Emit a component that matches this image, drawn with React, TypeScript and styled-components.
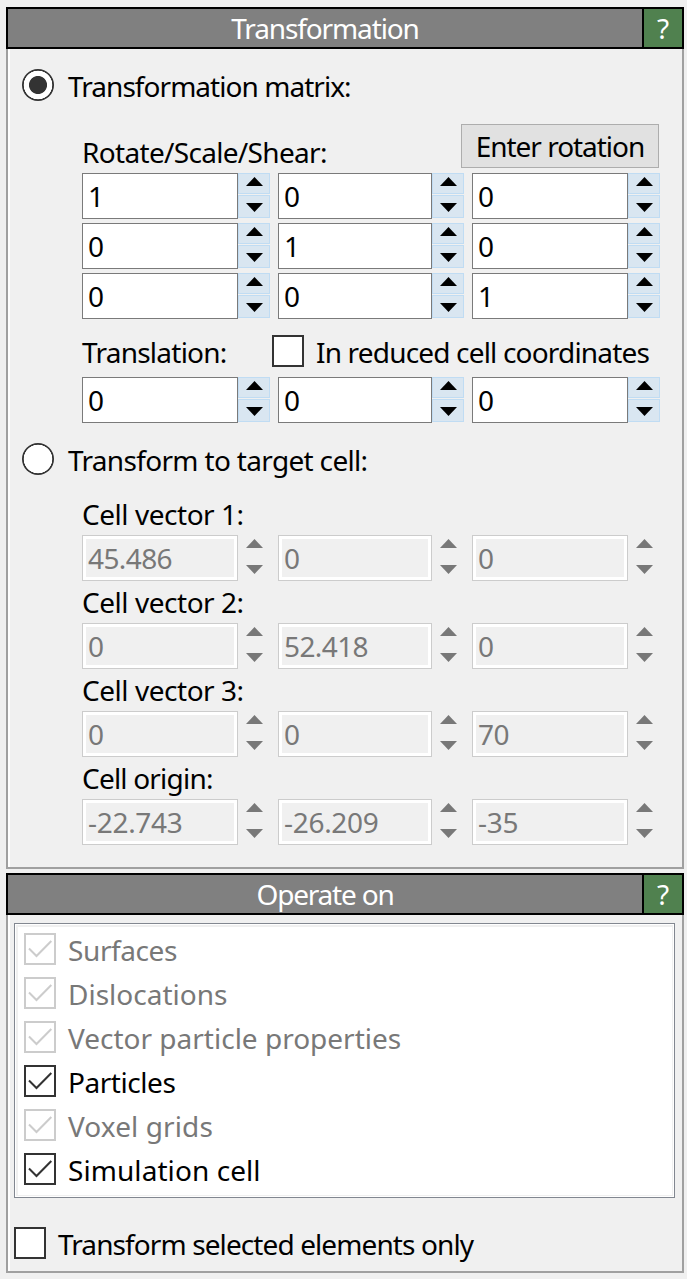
import React from "react";
import styled, { createGlobalStyle } from "styled-components";

const GlobalStyle = createGlobalStyle`
  * { box-sizing: border-box; }
  body {
    margin: 0;
    background: #f0f0f0;
    color: #000;
    font-family: "Noto Sans", "Open Sans", sans-serif;
    font-size: 28px;
    line-height: 32px;
  }
`;

const Window = styled.main`
  width: 687px;
  height: 1279px;
  padding: 7px 3px 0 6px;
  display: flex;
  flex-direction: column;
  gap: 4px;
  background: #f0f0f0;
  overflow: hidden;
`;

const Panel = styled.section<{ $height: number }>`
  display: flex;
  flex-direction: column;
  height: ${(p) => p.$height}px;
  flex: none;
`;

const Header = styled.header`
  display: flex;
  height: 42px;
  flex: none;
  border: 2px solid #000;
  background: #808080;
  color: #fff;
  text-align: center;
`;

const Title = styled.div`
  flex: 1;
  padding-top: 3px;
`;

const Help = styled.div`
  width: 40px;
  padding-top: 3px;
  border-left: 2px solid #000;
  background: #50814f;
`;

const Body = styled.div<{ $pad: string }>`
  flex: 1;
  display: flex;
  flex-direction: column;
  padding: ${(p) => p.$pad};
  border: 2px solid #a0a0a0;
  border-top: 0;
  box-shadow: inset 2px 0 #fff;
`;

const Text = styled.span<{ $track?: number }>`
  display: inline-block;
  white-space: nowrap;
  letter-spacing: ${(p) => p.$track ?? 0}px;
`;

const OptionRow = styled.label<{ $gap?: number }>`
  display: flex;
  height: 32px;
  gap: ${(p) => p.$gap ?? 14}px;

  & > ${Text} {
    margin-top: 1px;
  }
`;

const RadioMark = styled.span<{ $on?: boolean }>`
  flex: none;
  width: 32px;
  height: 32px;
  border-radius: 50%;
  background: radial-gradient(
    circle,
    ${(p) => (p.$on ? "#333 8.6px, #fff 9.4px" : "#fff 9px")},
    #fff 14px,
    #333 14.6px
  );
`;

const Box = styled.span<{ $dim?: boolean }>`
  flex: none;
  width: 32px;
  height: 32px;
  border: 2px solid ${(p) => (p.$dim ? "#ccc" : "#333")};
  background: #fff;
  color: ${(p) => (p.$dim ? "#ccc" : "#333")};

  svg { display: block; }
`;

const Group = styled.div`
  padding-left: 60px;
  display: flex;
  flex-direction: column;
`;

const MatrixHead = styled.div`
  display: flex;
  justify-content: space-between;
  width: 577px;
  height: 44px;
  margin: 23px 0 5px;

  & > ${Text} { margin-top: 12px; }
`;

const Button = styled.button`
  width: 198px;
  height: 44px;
  padding: 0;
  border: 1px solid #adadad;
  background: #e1e1e1;
  color: #000;
  font: inherit;
`;

const Rows = styled.div`
  display: flex;
  flex-direction: column;
  gap: 4px;
`;

const TripleRow = styled.div`
  display: grid;
  grid-template-columns: 188px 186px 188px;
  column-gap: 8px;
  height: 46px;
`;

const Spin = styled.div`
  display: flex;
`;

const Field = styled.div<{ $off?: boolean }>`
  flex: 1;
  padding: 6px 0 0 5px;
  border: 1px solid ${(p) => (p.$off ? "#ccc" : "#7a7a7a")};
  background: ${(p) => (p.$off ? "#f0f0f0" : "#fff")};
  box-shadow: inset 0 0 0 3px #fff;
  color: ${(p) => (p.$off ? "#787878" : "#000")};
`;

const Steps = styled.div`
  width: 32px;
  height: 45px;
  display: grid;
  grid-template-rows: 21px 23px;
  row-gap: 1px;
`;

const Step = styled.div<{ $off?: boolean; $top: number }>`
  padding: ${(p) => p.$top}px 0 0 7px;
  border: 1px solid ${(p) => (p.$off ? "transparent" : "#c0dcf3")};
  background: ${(p) => (p.$off ? "transparent" : "#d9e6f1")};
  color: ${(p) => (p.$off ? "#787878" : "#000")};

  svg { display: block; }
`;

const TranslationRow = styled.div`
  display: grid;
  grid-template-columns: 190px 1fr;
  height: 32px;
  margin: 16px 0 10px;

  & > ${Text} { margin-top: 1px; }
`;

const VectorBlock = styled.div`
  display: grid;
  grid-template-rows: 32px 46px;
  row-gap: 5px;
  margin-bottom: 5px;
`;

const List = styled.div`
  display: flex;
  flex-direction: column;
  gap: 12px;
  width: 661px;
  height: 275px;
  padding: 9px;
  border: 1px solid #828790;
  background: #fff;
  box-shadow: inset 0 0 0 1px #fff, inset 0 0 0 2px #f0f0f0, inset 3px 3px #f0f0f0;
`;

const ListRow = styled.label<{ $dim?: boolean }>`
  display: flex;
  gap: 12px;
  height: 32px;
  color: ${(p) => (p.$dim ? "#787878" : "#000")};

  & > ${Text} { margin-top: 1px; }
`;

const Spacer = styled.div<{ $h: number }>`
  height: ${(p) => p.$h}px;
  flex: none;
`;

const Arrow = ({ down }: { down?: boolean }) => (
  <svg width="17" height="9" viewBox="0 0 17 9" fill="currentColor">
    <path d={down ? "M0 0H17L8.5 9Z" : "M0 9H17L8.5 0Z"} />
  </svg>
);

const Tick = () => (
  <svg width="28" height="28" viewBox="0 0 28 28" fill="none" stroke="currentColor" strokeWidth="2">
    <path d="M3 13.5L10.5 21L25.3 6" />
  </svg>
);

const Triple = ({ values, off }: { values: string[]; off?: boolean }) => (
  <TripleRow>
    {values.map((v, i) => (
      <Spin key={i}>
        <Field $off={off}>
          <Text $track={v.startsWith("-") ? -0.3 : -0.6}>{v}</Text>
        </Field>
        <Steps>
          <Step $off={off} $top={3}><Arrow /></Step>
          <Step $off={off} $top={7}><Arrow down /></Step>
        </Steps>
      </Spin>
    ))}
  </TripleRow>
);

const matrix = [["1", "0", "0"], ["0", "1", "0"], ["0", "0", "1"]];

const cell = [
  { label: "Cell vector 1:", track: -0.46, values: ["45.486", "0", "0"] },
  { label: "Cell vector 2:", track: -0.46, values: ["0", "52.418", "0"] },
  { label: "Cell vector 3:", track: -0.46, values: ["0", "0", "70"] },
  { label: "Cell origin:", track: -0.8, values: ["-22.743", "-26.209", "-35"] },
];

const elements = [
  { label: "Surfaces", track: -0.4, dim: true },
  { label: "Dislocations", track: 0, dim: true },
  { label: "Vector particle properties", track: 0, dim: true },
  { label: "Particles", track: -0.45 },
  { label: "Voxel grids", track: 0.1, dim: true },
  { label: "Simulation cell", track: 0.07 },
];

export default function App() {
  return (
    <>
      <GlobalStyle />
      <Window>
        <Panel $height={862}>
          <Header>
            <Title><Text $track={-1.12}>Transformation</Text></Title>
            <Help>?</Help>
          </Header>
          <Body $pad="20px 0 0 14px">
            <OptionRow>
              <RadioMark $on />
              <Text $track={-0.95}>Transformation matrix:</Text>
            </OptionRow>
            <Group>
              <MatrixHead>
                <Text $track={-0.68}>Rotate/Scale/Shear:</Text>
                <Button><Text $track={-1.03}>Enter rotation</Text></Button>
              </MatrixHead>
              <Rows>
                {matrix.map((row, i) => <Triple key={i} values={row} />)}
              </Rows>
              <TranslationRow>
                <Text $track={-0.75}>Translation:</Text>
                <OptionRow $gap={12}>
                  <Box />
                  <Text $track={-0.82}>In reduced cell coordinates</Text>
                </OptionRow>
              </TranslationRow>
              <Triple values={["0", "0", "0"]} />
            </Group>
            <Spacer $h={20} />
            <OptionRow>
              <RadioMark />
              <Text $track={-0.67}>Transform to target cell:</Text>
            </OptionRow>
            <Spacer $h={23} />
            <Group>
              {cell.map((c) => (
                <VectorBlock key={c.label}>
                  <Text $track={c.track}>{c.label}</Text>
                  <Triple values={c.values} off />
                </VectorBlock>
              ))}
            </Group>
          </Body>
        </Panel>
        <Panel $height={400}>
          <Header>
            <Title><Text $track={-1.2}>Operate on</Text></Title>
            <Help>?</Help>
          </Header>
          <Body $pad="8px 0 0 6px">
            <List>
              {elements.map((e) => (
                <ListRow key={e.label} $dim={e.dim}>
                  <Box $dim={e.dim}><Tick /></Box>
                  <Text $track={e.track}>{e.label}</Text>
                </ListRow>
              ))}
            </List>
            <Spacer $h={29} />
            <OptionRow $gap={12}>
              <Box />
              <Text $track={-0.9}>Transform selected elements only</Text>
            </OptionRow>
          </Body>
        </Panel>
      </Window>
    </>
  );
}
